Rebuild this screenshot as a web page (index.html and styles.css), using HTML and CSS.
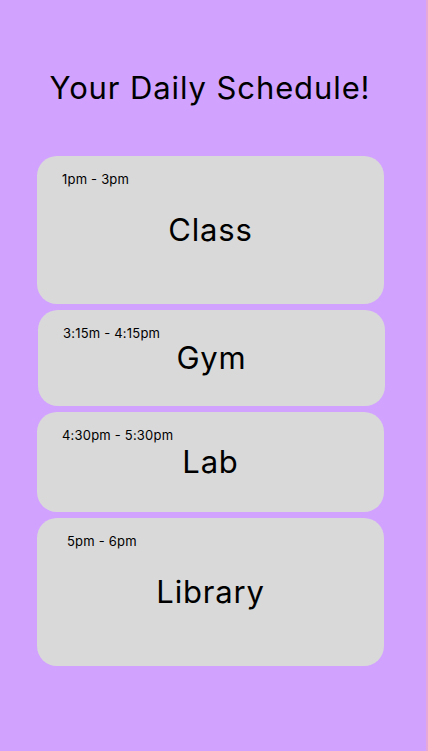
FILE: index.html
```html
<!DOCTYPE html>
<html lang="en">
<head>
<meta charset="utf-8">
<title>Your Daily Schedule!</title>
<link rel="stylesheet" href="styles.css">
</head>
<body>
<main class="screen">
  <h1 class="title">Your Daily Schedule!</h1>
  <section class="list">
    <article class="card card--tall">
      <span class="time">1pm - 3pm</span>
      <span class="label">Class</span>
    </article>
    <article class="card card--short card--shift">
      <span class="time">3:15m - 4:15pm</span>
      <span class="label">Gym</span>
    </article>
    <article class="card card--mid">
      <span class="time">4:30pm - 5:30pm</span>
      <span class="label">Lab</span>
    </article>
    <article class="card card--tall">
      <span class="time time--inset">5pm - 6pm</span>
      <span class="label">Library</span>
    </article>
  </section>
</main>
</body>
</html>
```

FILE: styles.css
```css
* { box-sizing: border-box; }
html, body { margin: 0; padding: 0; }
body {
  background: #D1A3FE;
  font-family: "Inter", "Noto Sans", sans-serif;
  color: #000;
}
.screen {
  width: 428px;
  min-height: 751px;
  border-right: 2px solid #E6A8D8;
  padding-top: 68px;
}
.title {
  margin: 0 0 48px 0;
  font-size: 31px;
  font-weight: 400;
  line-height: 40px;
  letter-spacing: 0.9px;
  text-align: center;
  padding-right: 6px;
}
.list {
  display: flex;
  flex-direction: column;
  gap: 6px;
  padding-left: 37px;
  width: 384px;
}
.card {
  background: #D9D9D9;
  border-radius: 20px;
  display: grid;
  grid-template: 1fr / 1fr;
  width: 347px;
}
.card--tall { height: 148px; }
.card--short { height: 96px; }
.card--mid { height: 100px; }
.card--shift { margin-left: 1px; }
.time, .label { grid-area: 1 / 1; }
.time {
  align-self: start;
  padding: 15px 0 0 25px;
  font-size: 13px;
  line-height: 16px;
  letter-spacing: 0.2px;
}
.time--inset { padding-left: 30px; }
.label {
  align-self: center;
  justify-self: center;
  font-size: 31px;
  line-height: 40px;
  letter-spacing: 0.8px;
}
```
